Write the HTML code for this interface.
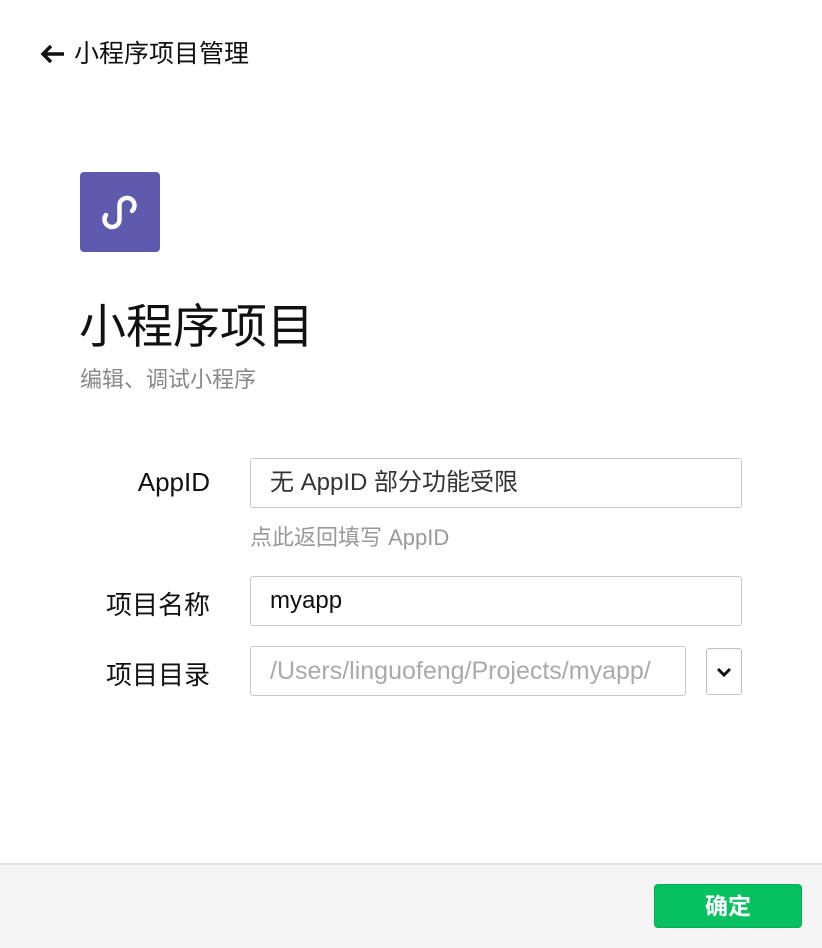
<!DOCTYPE html>
<html><head><meta charset="utf-8"><style>
*{margin:0;padding:0;box-sizing:border-box}
body{width:822px;height:948px;background:#fff;font-family:"Liberation Sans","Noto Sans CJK SC",sans-serif;position:relative;overflow:hidden}
.abs{position:absolute}
.input{position:absolute;border:1px solid #c8c8c8;border-radius:3px;height:50px;font-size:24px;padding-left:19px;line-height:48px;color:#333}
.label{position:absolute;font-size:26px;color:#111;text-align:right;width:200px;left:10px}
</style></head><body>
<div class="abs" style="left:38px;top:39px;font-size:25px;color:#111;line-height:30px">
<svg width="28" height="22" viewBox="0 0 28 22" style="vertical-align:-3px;margin-right:8px"><path d="M26 11H5M13 3L5 11L13 19" stroke="#111" stroke-width="3.5" fill="none"/></svg>小程序项目管理</div>
<div class="abs" style="left:80px;top:172px;width:80px;height:80px;background:#5f5aad;border-radius:4px">
<svg width="80" height="80" viewBox="0 0 80 80"><path d="M26 43 A7.5 7.5 0 1 0 39.5 47 L39.5 33 A7.5 7.5 0 1 1 52 39" stroke="#fff" stroke-width="4.5" fill="none" stroke-linecap="round"/></svg></div>
<div class="abs" style="left:79px;top:296px;font-size:47px;color:#111;line-height:62px">小程序项目</div>
<div class="abs" style="left:80px;top:366px;font-size:22px;color:#888;line-height:28px">编辑、调试小程序</div>
<div class="label" style="top:467px">AppID</div>
<div class="input" style="left:250px;top:458px;width:492px">无 AppID 部分功能受限</div>
<div class="abs" style="left:250px;top:524px;font-size:22px;color:#999;line-height:28px">点此返回填写 AppID</div>
<div class="label" style="top:585px">项目名称</div>
<div class="input" style="left:250px;top:576px;width:492px;color:#111">myapp</div>
<div class="label" style="top:655px">项目目录</div>
<div class="input" style="left:250px;top:646px;width:436px;color:#aaa;font-size:25px;white-space:nowrap;overflow:hidden">/Users/linguofeng/Projects/myapp/</div>
<div class="abs" style="left:706px;top:648px;width:36px;height:47px;border:1px solid #c0c0c0;border-radius:3px">
<svg width="34" height="45" viewBox="0 0 34 45"><path d="M11 20L17 26L23 20" stroke="#111" stroke-width="3" fill="none"/></svg></div>
<div class="abs" style="left:0;top:863px;width:822px;height:85px;background:#f5f5f5;border-top:2px solid #e2e2e2"></div>
<div class="abs" style="left:654px;top:884px;width:148px;height:44px;background:#07c160;border:1px solid #06ad56;border-radius:4px;color:#fff;font-size:23px;font-weight:bold;text-align:center;line-height:42px">确定</div>
</body></html>
